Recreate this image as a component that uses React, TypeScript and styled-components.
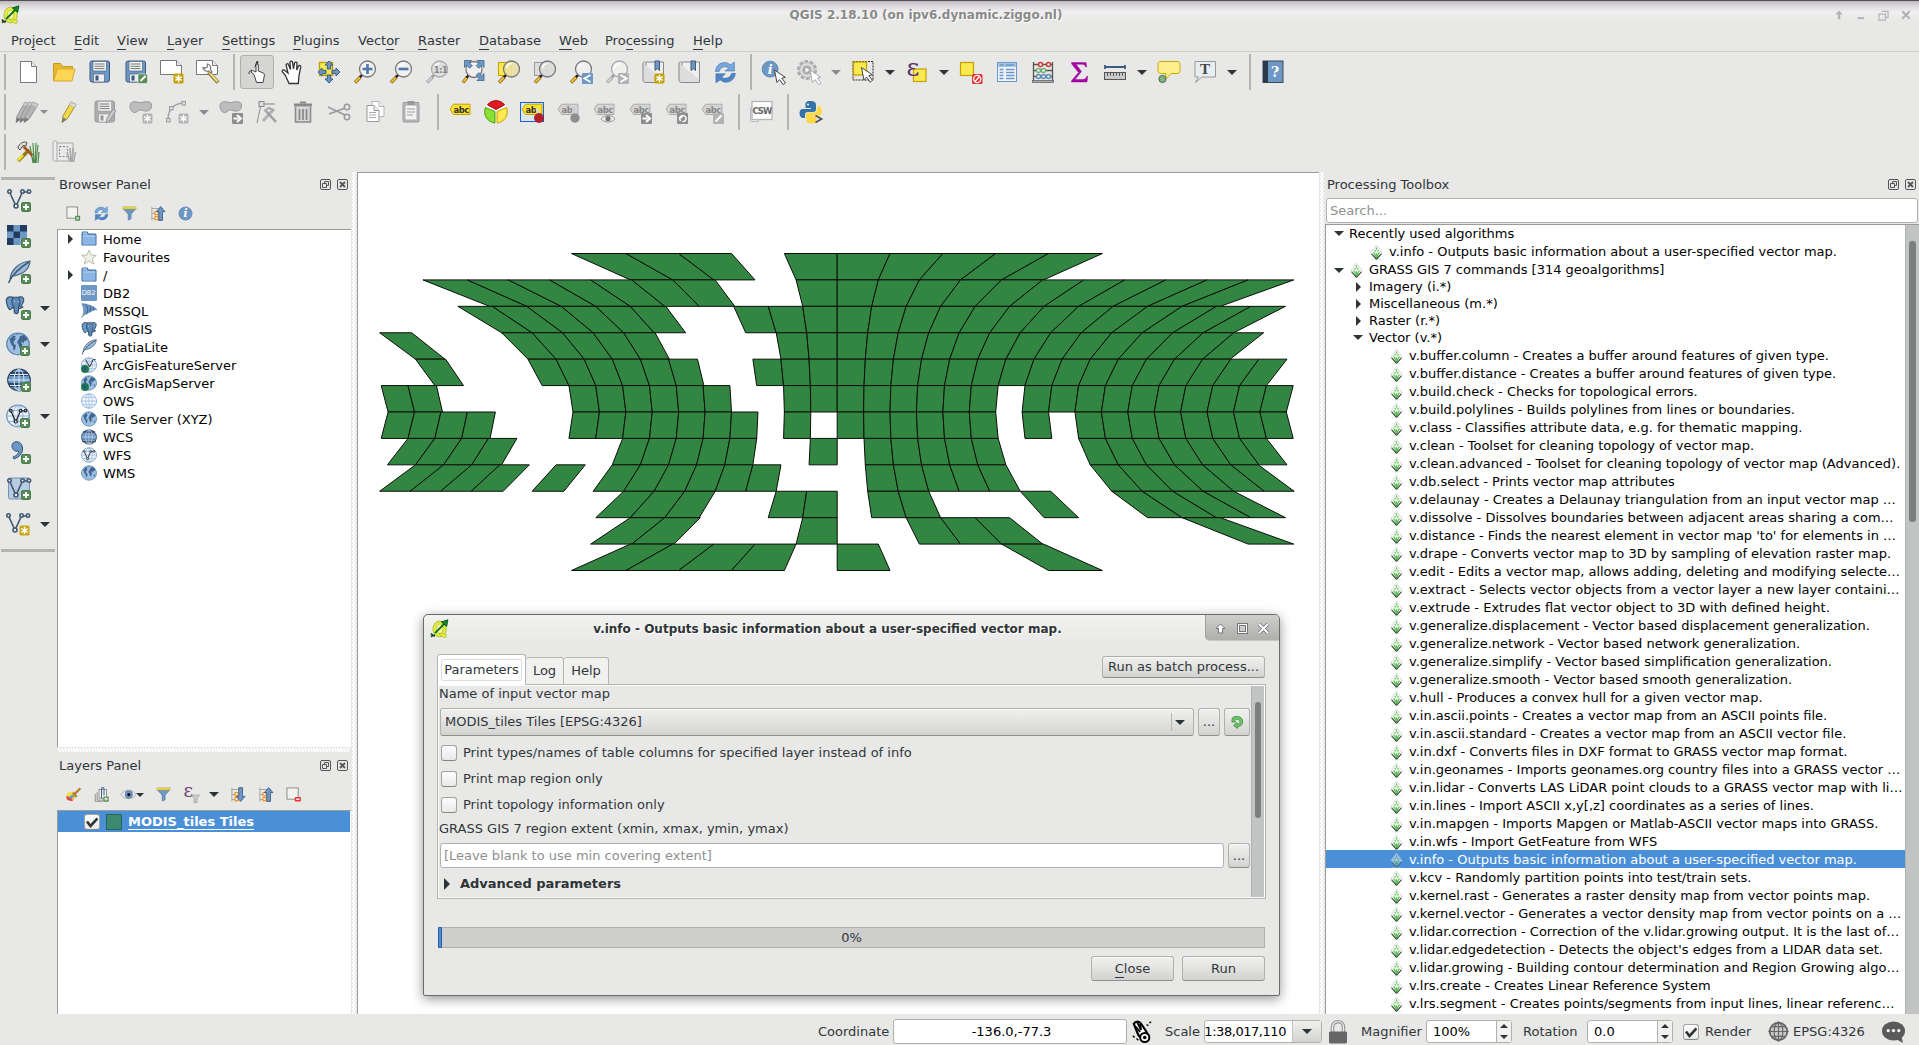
import React from 'react';
import styled, { createGlobalStyle, css } from 'styled-components';

const BG = '#e8e8e6';
const INK = '#31363b';
const SEL = '#4a90d9';

const GlobalStyle = createGlobalStyle`
  html, body { margin: 0; padding: 0; background: ${BG}; overflow: hidden; }
  * { box-sizing: border-box; }
  body { font: 13px/18px "DejaVu Sans", sans-serif; color: ${INK}; }
  svg { display: block; flex: none; }
`;

/* ---------- icon drawings, all on a 24 x 24 grid ---------- */

const B = '#6d97c4';
const BD = '#415a75';
const PlusBadge = () => (
  <g><rect x="14.5" y="14.5" width="9" height="9" rx="1.5" fill="#5a8c5a" stroke="#4b7a4b" /><path d="M19 16v6M16 19h6" stroke="#fff" strokeWidth="1.8" /></g>
);
const StarBadge = ({ c = '#c4a000' }: { c?: string }) => (
  <g><rect x="13.5" y="13.5" width="10" height="10" rx="1.5" fill={c} /><path d="M18.5 14.8v7.4M15.3 16.6l6.4 3.8M21.7 16.6l-6.4 3.8" stroke="#fff" strokeWidth="1.5" /></g>
);
const Lens = ({ cx = 14.5, cy = 9, off = false, fill = '#f1f1ef' }: { cx?: number; cy?: number; off?: boolean; fill?: string }) => (
  <g>
    <path d={`M2 22.5L${cx - 7} ${cy + 8}`} stroke={off ? '#a5a5a5' : '#8a6a20'} strokeWidth="3.4" />
    <path d={`M2.4 22L${cx - 7.4} ${cy + 8.4}`} stroke={off ? '#d0d0d0' : '#fbbf30'} strokeWidth="1.8" />
    <path d={`M${cx - 7.6} ${cy + 8.2}l2.6-2.6`} stroke={off ? '#999' : '#222'} strokeWidth="2.6" />
    <circle cx={cx} cy={cy} r="8" fill={fill} fillOpacity="0.9" stroke={off ? '#a9a9a9' : '#777'} strokeWidth="1.3" />
    <path d={`M${cx - 5} ${cy - 1}a5.4 5.4 0 0 1 5-4.4`} fill="none" stroke="#fff" strokeWidth="1.2" />
  </g>
);
const Cursor = ({ x, y, off = false }: { x: number; y: number; off?: boolean }) => (
  <path transform={`translate(${x} ${y})`} d="M0 0l2.4 12.4 2.7-2.8 3.6 5 2.3-1.7-3.7-4.7 3.5-.9z" fill="#fff" stroke={off ? '#aaa' : '#444'} strokeWidth="1" />
);
const Tag = ({ on = true, t = 'abc' }: { on?: boolean; t?: string }) => (
  <g>
    <path d="M2 9.2L5.5 4.2H22v10.3H5.5z" fill={on ? '#fbe22e' : '#d4d4d4'} stroke={on ? '#c4a000' : '#adadad'} />
    <text x="5.6" y="12.6" fontSize="8.4" fontWeight="700" fontFamily="DejaVu Sans" fill={on ? '#333' : '#868686'} letterSpacing="-.5">{t}</text>
  </g>
);
const GlobeLines = ({ c = '#8fb3dc' }: { c?: string }) => (
  <g fill="none" stroke={c}><ellipse cx="12" cy="12" rx="5" ry="10.5" /><path d="M12 1.5v21M1 12h22M3 6.500h18M3 17.500h18" /></g>
);
const Continents = () => (
  <g fill="#41658e"><path d="M3.500 7l4-3.500 2.500.5-1.500 2 1.500 1-2.500 2.500.5 2.500 2 1.500-1 4-1.500 1-.5-4-2-2.500-1-3z" /><path d="M13 7l1-3 4-1 3.500 3.500-1.500 3-1.500-1-1 3-1.500-2-1 1 1.500 2-1.500 4.500-1.500-1-1-3.500-1.500-2z" /><path d="M18.500 15l2.500-1-1 4zM10 2l2-.5V3z" /></g>
);
const VShape = ({ c = '#41586f' }: { c?: string }) => (
  <g stroke={c} strokeWidth="1.6" fill="#e8eef4"><path d="M2.5 4L9 18l6.500-14h6.500" fill="none" /><circle cx="2.500" cy="3.500" r="1.700" /><circle cx="15.500" cy="3.500" r="1.700" /><circle cx="22" cy="3.500" r="1.700" /><circle cx="9" cy="18" r="2" /></g>
);
const Elephant = () => (
  <g stroke="#34526f" strokeLinejoin="round">
    <path d="M10 3c-3-1.500-7-1.500-8.300.7C.5 6 3 14 4.800 14.500c1 .3 1.700-1 2.700-2 1 .5 1.500.5 2.500.2V5z" fill="#6d97c4" strokeWidth="1.200" />
    <path d="M12.500 2.500c2-1 5-1 6 1 .8 2-1 5.500-2.700 8l2.200.5-2.500 1.300-3 .2z" fill="#6d97c4" strokeWidth="1.200" />
    <path d="M7.500 3.500c2-2 5-2 6.500 0 1.500 2.500.7 6-.3 8.500l-.4 5c-.2 2.200-3.500 2.200-4 0L9 12c-2.500-2-2.500-6-1.500-8.500z" fill="#5c89b8" strokeWidth="1.200" />
    <path d="M9 6.500h.8M13.500 6.500h.6" stroke="#e8f0f8" strokeWidth="1" />
  </g>
);
const Feather = () => (
  <g><path d="M3 19C4 10 12 2 23 1c-.5 8-7 13-16 15" fill="#9dbcdc" stroke="#4b6580" strokeWidth="1.2" /><path d="M1.500 23C5 15 12 8 22 2" fill="none" stroke="#3f5a74" strokeWidth="1.500" /></g>
);
const EllipseGlobe = ({ fill, stroke, children }: { fill: string; stroke: string; children?: React.ReactNode }) => (
  <g><ellipse cx="12" cy="12" rx="11.300" ry="10.800" fill={fill} stroke={stroke} strokeWidth="1.200" />{children}</g>
);
const Bean = () => <path d="M1 6c0-4 4-5 7-4s4 .5 7 0 7-1 7.500 3c.5 5-3 6.500-7 6-2-.2-3-1.500-5-1-2 .6-3 3-5.500 2.500S1 9 1 6z" fill="#bcbcbc" stroke="#9a9a9a" />;
const Floppy = ({ a, d }: { a: string; d: string }) => (
  <g><rect x="2" y="1" width="19.500" height="21" rx="2" fill={a} stroke={d} /><rect x="5" y="1.500" width="13.500" height="9.500" fill="#f4f4f2" stroke={d} strokeWidth=".6" /><path d="M6.500 4h10M6.500 6.300h10M6.500 8.600h10" stroke="#777" /><rect x="5.500" y="14" width="11" height="8" fill="#eee" stroke={d} strokeWidth=".6" /><rect x="7.500" y="15.500" width="3" height="5" fill={d} /></g>
);
const Folder = () => (
  <g><path d="M1.500 21V3.500C1.500 2 2 1.500 3 1.500h6.500l1.500 3h10.500c1 0 1 .5 1 1.500v15z" fill="#7fabdc" stroke="#2c5a93" strokeWidth="1.400" /><path d="M2.500 8h19v12.500h-19z" fill="#8ab5e4" /><path d="M2.500 7.500h19M3 3h6" stroke="#c4dcf5" strokeWidth="1.300" /></g>
);
const Refresh = () => (
  <g fill="#4f86c6" stroke="#2f609f" strokeWidth=".5"><path d="M1.500 11C2 4 8 .5 14 2l3.500 2 4-3v9.500h-10l4-3C11.500 4.700 7 6 5.500 11z" fill="#77a7dd" /><path d="M22.500 13c-.5 7-6.500 10.500-12.500 9L6.500 20l-4.500 3V13.500h10l-4 3.500c4 2.500 9 1 10.500-4z" /></g>
);
const Funnel = () => (
  <g><path d="M1.500 4L10 13v9.500l4.500-2V13L22.500 4z" fill="#6d97c4" stroke="#4d7299" /><path d="M1 3.200h22" stroke="#e8d838" strokeWidth="3.400" /><path d="M1 1h22M1 5h22" stroke="#a0983c" strokeWidth=".6" /></g>
);
const TreeArrow = ({ up }: { up: boolean }) => (
  <g>
    <path d="M3 1v22M3 4h18M3 12h6M3 20h6" stroke="#999" strokeWidth="1.300" fill="none" />
    <rect x="8" y="9" width="5" height="5" fill="#fff" stroke="#f28c1c" strokeWidth="1.800" /><rect x="8" y="17" width="5" height="5" fill="#fff" stroke="#f28c1c" strokeWidth="1.800" />
    <path transform={up ? '' : 'matrix(1 0 0 -1 0 24)'} d="M17 1l7 8h-4v14h-6V9h-4z" fill={B} stroke="#2d4e74" strokeWidth="1.200" />
  </g>
);
const InfoDisc = () => (
  <g><circle cx="12" cy="12" r="10.500" fill={B} stroke="#4d79aa" /><text x="8.800" y="18" fontSize="17" fontStyle="italic" fontWeight="700" fontFamily="DejaVu Serif" fill="#fff">i</text></g>
);
const Branch = () => (
  <g>
    <path d="M12 0l9 12-9 11-9-11z" fill="#f5f9f4" stroke="#c6cfc5" strokeWidth="1" />
    <path d="M12 4v3M12 13v8M12 20.500L7.500 12M12 20.500l4.500-8.500M9.300 8l.9 2.500M14.700 8l-.9 2.500" stroke="#55c04c" strokeWidth="2" fill="none" />
    <path d="M4 14l8 9 8-9" stroke="#2c3a2c" strokeWidth="1.700" fill="none" />
    <path d="M4 23.500h16" stroke="#d8dbd8" strokeWidth="1" />
  </g>
);
const LogoQ = () => (
  <g><ellipse cx="11.500" cy="12" rx="8" ry="9.500" fill="#e3ef3a" stroke="#a8b53a" /><ellipse cx="11.500" cy="12" rx="4" ry="6" fill="#f4f7a8" stroke="#b8c33c" /><path d="M10 17c3 1 4 6 9 5l1-3-5-2z" fill="#e3ef3a" stroke="#a8b53a" strokeWidth=".8" /><path d="M6 17L18 5" stroke="#0d6e22" strokeWidth="2.400" /><path d="M13.500 3.500L21.500 1l-1.500 8z" fill="#0f8a2a" stroke="#094a16" /><path d="M1 17.500l4.500 3.500M1 21l5-2" stroke="#1a3c1a" strokeWidth="1.800" /></g>
);
const Page = ({ x = 0, y = 0, w = 16, h = 21, c = '#777' }: { x?: number; y?: number; w?: number; h?: number; c?: string }) => (
  <g><path d={`M${x} ${y}h${w - 5}l5 5v${h - 5}h${-w}z`} fill="#fff" stroke={c} /><path d={`M${x + w - 5} ${y}v5h5`} fill="#eee" stroke={c} /></g>
);
const Pencil = ({ off = false, dx = 0 }: { off?: boolean; dx?: number }) => (
  <g transform={`translate(${dx} 0)`}><path d="M5 22.500l1-6.500L14 2l5 2.500-8.500 14z" fill={off ? '#b4b4b4' : '#f0d84a'} stroke={off ? '#999' : '#a8902a'} /><path d="M14 2l5 2.500-1.500 3-5.200-2.500z" fill={off ? '#ccc' : '#ddd'} stroke="#aaa" strokeWidth=".6" /><path d="M5 22.500l.8-5 4 2z" fill="#777" /></g>
);
const Bubble = ({ fill, stroke }: { fill: string; stroke: string }) => <path d="M4 1.500h16c2 0 3 1 3 3v6c0 2-1 3-3 3h-6l-5.500 6 .5-6H4c-2 0-3-1-3-3v-6c0-2 1-3 3-3z" fill={fill} stroke={stroke} />;
const Book = () => <g><path d="M2 3c0-1.500 3-1.500 3 0v16.500h17.500V2H5" fill="#efefef" stroke="#888" /><path d="M2 3v17.500c0 2 3 2 4 2h16.500v-3" fill="#ddd" stroke="#888" /><path d="M14 1h4.500v9.500l-2.200-2-2.300 2z" fill={B} stroke={BD} /></g>;
const BadgeBox = ({ c, children }: { c: string; children: React.ReactNode }) => <g><rect x="13" y="13" width="11" height="11" rx="1" fill={c} />{children}</g>;

const glyphs: Record<string, React.ReactNode> = {
  logo: <LogoQ />,
  newdoc: <Page x={4.500} y={1.500} />,
  open: <g><path d="M1.500 21V3.500h7l2 3h10V10" fill="#e8b92e" stroke="#c89b1e" /><path d="M1.500 21l4-12h17.500l-3 12z" fill="#fdd655" stroke="#d7a628" /></g>,
  save: <Floppy a={B} d="#3d5a7d" />,
  saveas: <g><Floppy a={B} d="#3d5a7d" /><rect x="14" y="14" width="9.500" height="9.500" rx="1.500" fill="#5a8c5a" stroke="#fff" strokeWidth=".5" /><path d="M16.500 21l5-5" stroke="#fff" strokeWidth="2" /></g>,
  composer: <g><Page x={0.500} y={0.500} w={21} h={14} /><StarBadge /></g>,
  manager: <g><Page x={0.500} y={0.500} w={21} h={14} /><path d="M12.500 12L22 22.500" stroke="#8f7c3a" strokeWidth="4" /><path d="M13 12l8.500 9.500" stroke="#f0dc82" strokeWidth="2" /><path d="M7 7.500c.3 2.500 3 4.500 5.500 3.500l2.500 2 1-1-1.500-2.500C15.500 7 14 4.300 11.500 4l-.3 3.200-2 .8z" fill="#fff" stroke="#777" strokeWidth="1.200" /></g>,
  touch: <g><path d="M9 14.500L6 12l1.500-1.500L11 12V5c0-2 2.300-2 2.300 0v6l5 2c1 .5 1.200 1.500 1 3L18 22.500h-6.500z" fill="#fff" stroke="#444" /><path d="M4 14c0-3 1-3 3-4M12 1l-2 6M13 1l-1 4" stroke="#333" fill="none" /></g>,
  hand: <path d="M8 23.500L4.500 15.500 1.500 12c-1-1.800 1-3 2.700-1.300L7 13 5.200 5.300C4.800 3.700 7 3 7.500 4.700L9.500 9.500 9 2.500C9 .7 11.400.7 11.600 2.500L12.500 9l1-5.800c.3-1.600 2.500-1.300 2.500.3L15.700 10l1.800-3.800c.7-1.400 2.600-.7 2.200.9L18 15.500l-.7 8z" fill="#fff" stroke="#333" strokeWidth="1.300" />,
  pansel: <g><rect x="2.500" y="2.500" width="13" height="13" fill="#fce94f" stroke="#c4a000" strokeWidth="1.400" /><path d="M12 1l4 4h-2.300v4h-3.400V5H8zM12 23l4-4h-2.300v-4h-3.400v4H8zM1 12l4-4v2.300h4v3.400H5V16zM23 12l-4-4v2.300h-4v3.400h4V16z" fill={B} stroke="#395a80" /></g>,
  zoomin: <g><Lens /><path d="M14.500 4v10M9.500 9h10" stroke="#4d79aa" strokeWidth="2.600" /></g>,
  zoomout: <g><Lens /><path d="M9.500 9h10" stroke="#4d79aa" strokeWidth="2.600" /></g>,
  zoom11: <g><Lens off fill="#ddd" /><text x="8.600" y="12.500" fontSize="9" fontWeight="700" fontFamily="DejaVu Sans" fill="#888" letterSpacing="-.8">1:1</text></g>,
  zoomfull: <g><Lens cx={13} cy={9.500} /><g fill={B} stroke="#3f658f" strokeWidth=".8"><path d="M3.500.5h7L8.300 2.700l3 3L8.700 8.300l-3-3L3.500 7.500z" /><path d="M23 .5h-7l2.200 2.200-3 3 2.600 2.600 3-3L23 7.500z" /><path d="M23 20.500h-7l2.200-2.200-3-3 2.600-2.600 3 3 2.200-2.200z" /></g></g>,
  zoomsel: <g><rect x="1.500" y="2.500" width="13" height="13" fill="#fce94f" stroke="#c4a000" /><Lens fill="#e9e2a4" /></g>,
  zoomlayer: <g><rect x="1.500" y="2.500" width="13" height="13" fill="#ddd" stroke="#999" /><Lens fill="#dcdcd9" /></g>,
  zoomlast: <g><Lens /><BadgeBox c={B}><path d="M21.500 15l-6 3.500 6 3.500" stroke="#fff" strokeWidth="1.900" fill="none" /></BadgeBox></g>,
  zoomnext: <g><Lens off /><BadgeBox c="#b3b3b3"><path d="M15.500 15l6 3.500-6 3.500" stroke="#fff" strokeWidth="1.900" fill="none" /></BadgeBox></g>,
  newbook: <g><Book /><StarBadge /></g>,
  book: <Book />,
  refresh: <g transform="translate(1 1) scale(.95)"><Refresh /></g>,
  info: <g><g transform="scale(.76)"><InfoDisc /></g><Cursor x={13.500} y={10} /></g>,
  action: <g><circle cx="10" cy="10" r="8.300" fill="none" stroke="#a9a9a9" strokeWidth="3.400" strokeDasharray="3.500 1.700" /><circle cx="10" cy="10" r="7.500" fill="#dcdcdc" stroke="#b5b5b5" /><circle cx="10" cy="10" r="4.500" fill="#aaa" /><path d="M8.500 7.500l4.200 2.500-4.200 2.500z" fill="#fff" /><Cursor x={13} y={10} off /></g>,
  select: <g><rect x="2" y="1.500" width="20" height="18.500" fill="none" stroke="#222" strokeDasharray="2 1" /><rect x="2.500" y="2" width="13" height="13" fill="#fce94f" stroke="#c4a000" strokeWidth="1.300" /><Cursor x={10.500} y={7.500} /></g>,
  eps: <g><rect x="8.500" y="9" width="12.500" height="12.500" fill="#fce94f" stroke="#c4a000" strokeWidth="1.200" /><text x="1.500" y="15.500" fontSize="25" fontFamily="DejaVu Serif" fill="#5c3566">ε</text></g>,
  desel: <g><rect x="1.500" y="2.500" width="13" height="13" fill="#fce94f" stroke="#c4a000" strokeWidth="1.200" /><rect x="13" y="14" width="10.500" height="10" rx="1.500" fill="#d33" /><circle cx="18.200" cy="19" r="3.600" fill="none" stroke="#fff" strokeWidth="1.300" /><path d="M16 21.500l4.500-5" stroke="#fff" strokeWidth="1.300" /></g>,
  table: <g><rect x="2.500" y="2.500" width="19" height="19" fill="#eff5fb" stroke={B} /><path d="M3 5h18" stroke="#9fc4e8" strokeWidth="4" /><path d="M5 5h4M11 5h8" stroke={B} strokeWidth="1.600" /><path d="M4.500 9.500h4M4.500 12.500h4M4.500 15.500h4M4.500 18.500h4M11 9.500h8.500M11 12.500h8.500M11 15.500h8.500M11 18.500h8.500" stroke={B} strokeWidth="1.300" /></g>,
  abacus: <g><path d="M2.500 2v19M21.500 2v19M2.500 4.500h19M2.500 10.500h19M2.500 16.500h19" stroke="#555" strokeWidth="1.300" /><g fill="#fff" strokeWidth="1.500"><g stroke="#c33"><circle cx="9.500" cy="4.500" r="2" /><circle cx="17.500" cy="4.500" r="2" /></g><g stroke="#6fb06f"><circle cx="7.500" cy="10.500" r="2" /><circle cx="12.500" cy="10.500" r="2" /></g><g stroke="#5c89b8"><circle cx="7.500" cy="16.500" r="2" /><circle cx="12.500" cy="16.500" r="2" /><circle cx="17.500" cy="16.500" r="2" /></g></g><rect x="1.500" y="20.500" width="21" height="2" fill="#aaa" stroke="#666" strokeWidth=".8" /></g>,
  sigma: <path d="M4.500 2.500H19l.7 4.500h-1c-.6-2-1.500-2.700-4-2.700H9l5.500 7.200L8 19.500h7.500c2.500 0 3.500-1 4.300-3.200h1L20 22H4.500v-1.200l7-8.300-7-8.800z" fill="#a800a8" stroke="#8b008b" strokeWidth=".4" />,
  ruler: <g><path d="M2 7h20M2 5v4M22 5v4" stroke="#3b5c80" strokeWidth="1.800" /><rect x="1.500" y="12.500" width="21" height="7" fill="#c9c9c9" stroke="#555" /><path d="M4.500 13v3M7.500 13v2.500M10.500 13v3M13.500 13v2.500M16.500 13v3M19.500 13v2.500" stroke="#555" /></g>,
  tip: <g><Bubble fill="#fdf08c" stroke="#c9a900" /><circle cx="5.500" cy="19" r="3.600" fill="#7fb07f" stroke="#4b6b4b" /></g>,
  annot: <g><path d="M2 1.500h20.500V17H9l-6.500 5.500L5.500 17H2z" fill="#e6eef2" stroke="#999" /><text x="7" y="14" fontSize="15" fontWeight="700" fontFamily="Liberation Serif" fill="#444">T</text></g>,
  help: <g><rect x="2" y="1" width="20" height="21.500" fill={B} stroke="#3b4a58" /><rect x="2" y="1" width="5" height="21.500" fill="#29394a" /><text x="10" y="17" fontSize="14" fontWeight="700" fontFamily="DejaVu Serif" fill="#fff">?</text></g>,
  edits: <g><Pencil off dx={-5} /><Pencil off dx={-1} /><Pencil off dx={3} /></g>,
  edit: <Pencil />,
  saveedit: <g><Floppy a="#adadad" d="#999" /><path d="M13 23l1-5 6-9 3 2-6 9z" fill="#c6c6c6" stroke="#999" /></g>,
  addfeat: <g><Bean /><StarBadge c="#b3b3b3" /></g>,
  addcurve: <g><path d="M3 20C3 11 7 4 18 3" fill="none" stroke="#a5a5a5" strokeWidth="1.500" /><g fill="#ddd" stroke="#999"><rect x="1.500" y="18.500" width="3.500" height="3.500" /><rect x="4.500" y="6.500" width="3.500" height="3.500" /><rect x="17" y="1.500" width="3.500" height="3.500" /></g><StarBadge c="#b3b3b3" /></g>,
  movefeat: <g><Bean /><BadgeBox c="#8e8e8e"><path d="M14.500 18.500h5M18 15l4 3.500-4 3.500" stroke="#fff" strokeWidth="2" fill="none" /></BadgeBox></g>,
  node: <g><path d="M2 23L6 4h14" stroke="#a5a5a5" strokeWidth="1.300" fill="none" /><rect x="4" y="1.500" width="5" height="5" fill="#ddd" stroke="#888" /><path d="M8 21L19 9" stroke="#b5b5b5" strokeWidth="3.200" /><path d="M11 11l10 11" stroke="#a0a0a0" strokeWidth="2.600" /><path d="M9 11l5-3 4 2" stroke="#aaa" strokeWidth="2" fill="none" /></g>,
  trash: <g fill="none" stroke="#8a8a8a"><path d="M4.500 7v15h15V7" fill="#d9d9d9" strokeWidth="1.600" /><path d="M3 5h18" strokeWidth="3" /><path d="M9 2.500h6" strokeWidth="2" /><path d="M8.500 9v11M12 9v11M15.500 9v11" strokeWidth="1.800" /></g>,
  cut: <g fill="none" stroke="#9a9a9a" strokeWidth="1.500"><path d="M1 7l17 8M2 14L18 8" /><circle cx="20" cy="7" r="2.700" /><circle cx="20" cy="17" r="2.700" /></g>,
  copy: <g><Page x={9} y={1.500} w={12} h={15} c="#b5b5b5" /><Page x={4} y={5.500} w={12} h={16} c="#999" /><path d="M6 12.500h7M6 15h7M6 17.500h7" stroke="#aaa" /></g>,
  paste: <g><rect x="4" y="2.500" width="16" height="19.500" rx="1" fill="#bbb" stroke="#999" /><rect x="6" y="5" width="12" height="15" fill="#f4f4f4" stroke="#aaa" /><rect x="8.500" y="1" width="7" height="4" fill="#999" /><path d="M8 9h8M8 12h8M8 15h6" stroke="#999" /></g>,
  tagon: <Tag />,
  pie: <g><circle cx="12" cy="12" r="11.300" fill="#fff" /><path d="M11 11.500L1.500 7.500A11.300 11.300 0 0 0 11 23z" fill="#8ae234" stroke="#4e9a06" /><path d="M13 11.500l9.500-4A11.300 11.300 0 0 1 13 23z" fill="#fce94f" stroke="#c4a000" /><path d="M12 9.500L3.500 4.800a10.800 10.800 0 0 1 17 0z" fill="#e01b24" stroke="#a40000" /></g>,
  tagpin: <g><rect x="0.500" y="2.500" width="23" height="19" fill="#dbe6f2" stroke="#1b63c6" /><Tag t="ab" /><path d="M16.500 8.500l3 7" stroke="#ddd" strokeWidth="2.500" /><circle cx="19" cy="18" r="4.700" fill="#b3202a" stroke="#8a1018" strokeWidth=".5" /></g>,
  tagpin0: <g><Tag on={false} t="ab" /><path d="M17.500 7v9" stroke="#ccc" strokeWidth="3" /><circle cx="19" cy="18" r="4.700" fill="#8e8e8e" /></g>,
  tageye: <g><Tag on={false} /><path d="M9 19c3-4.500 11-4.500 14 0-3 4-11 4-14 0z" fill="#eee" stroke="#999" /><circle cx="16" cy="18.700" r="2.600" fill="#777" /></g>,
  tagmove: <g><Tag on={false} /><BadgeBox c="#8e8e8e"><path d="M14.500 18.500h5M18 15l4 3.500-4 3.500" stroke="#fff" strokeWidth="2" fill="none" /></BadgeBox></g>,
  tagrot: <g><Tag on={false} /><BadgeBox c="#8e8e8e"><path d="M16 20c-2-4 5-6.500 6-2 .5 2-1.500 4-3.500 3.500M18.500 17l-3 1 1 3" stroke="#fff" strokeWidth="1.500" fill="none" /></BadgeBox></g>,
  tagedit: <g><Tag on={false} /><BadgeBox c="#b3b3b3"><path d="M15.500 21.500l6-6" stroke="#fff" strokeWidth="2" /></BadgeBox></g>,
  csw: <g><path d="M1.500 21V8h8v13.500h-8" fill="#eee" stroke="#bbb" /><rect x="3" y="1.500" width="20" height="18" fill="#fff" stroke="#b5b5b5" strokeWidth="1.300" /><text x="3.400" y="13.600" fontSize="9.400" fontWeight="700" fontFamily="DejaVu Sans Condensed, DejaVu Sans" fill="#666" letterSpacing="-.9">CSW</text></g>,
  python: <g><path d="M11.500 1c-5 0-5 1.500-5 5v2H12v1H4C1.500 9 .5 11 .5 13.500S2 18 4 18h2v-3c0-2 1-3 3-3h5c2 0 3-1 3-3V5c0-3-2-4-5.500-4z" fill="#3572a5" /><circle cx="9" cy="4.500" r="1" fill="#fff" /><path d="M12.500 23.500c5 0 5-1.500 5-5v-2H12v-1h8c2.500 0 3-2 3-4.500S22.500 6.500 20 6.500h-2v3c0 2-1 3-3 3h-5c-2 0-3 1-3 3V20c0 2.500 2 3.500 5.500 3.500z" fill="#ffd845" /><path d="M16.500 15.500l6 3.500-6 3.500" stroke="#555" strokeWidth="1.800" fill="none" /></g>,
  grassopen: <g><path d="M12 9l7 14M14 6l3 17M17 3l1 20M20 3l-1 20M22 5l-2 18M23 12l-1 11" stroke="#4c8c4c" strokeWidth="1.200" fill="none" /><path d="M2 21L13 10" stroke="#8d7a1c" strokeWidth="3.600" /><path d="M2 20.500L7 15" stroke="#f5ea2a" strokeWidth="2.400" /><path d="M2 8c1-5 6-7 9-5.500L10 6 7 5.500 4 10z" fill="#ddd" stroke="#555" /><path d="M7.500 6.500l9 9" stroke="#a05a22" strokeWidth="2.800" /></g>,
  grassreg: <g><path d="M4 3v18h16" fill="none" stroke="#aaa" /><path d="M1 3c0-3 4-3 4 0v16c0 3-4 3-4 0z" fill="#ececec" stroke="#aaa" /><path d="M5 3h16v13" fill="none" stroke="#aaa" /><rect x="7.500" y="6.500" width="8" height="10" fill="none" stroke="#888" strokeDasharray="2 1.500" /><path d="M15 12l3 10M18 8l1 14M21 8l-1 14M23.500 12l-2 10" stroke="#aaa" strokeWidth="1.600" /></g>,
  addvector: <g><VShape /><PlusBadge /></g>,
  addraster: <g><rect x="0" y="1" width="20" height="20" fill={B} /><path d="M0 1h6.500v6.500H0zM13 1h7v6.500h-7zM6.500 7.500H13V14H6.500zM0 14h6.500v7H0z" fill="#213c5e" /><path d="M13 14h7v7h-7z" fill="#86add6" /><PlusBadge /></g>,
  addsqlite: <g><Feather /><PlusBadge /></g>,
  addpg: <g><g transform="translate(-2 -1)"><Elephant /></g><PlusBadge /></g>,
  addwms: <g transform="translate(-1 0)"><EllipseGlobe fill="#9dbfe3" stroke="#5f86b0"><Continents /></EllipseGlobe><PlusBadge /></g>,
  addwcs: <g><EllipseGlobe fill="#6d97c4" stroke="#2b4363"><path d="M3 6h18M2 17h20" stroke="#2b4363" strokeWidth="4" /><GlobeLines c="#dbe8f5" /></EllipseGlobe><PlusBadge /></g>,
  addwfs: <g transform="translate(-1 0)"><EllipseGlobe fill="#eef4fb" stroke="#6d97c4"><GlobeLines /></EllipseGlobe><g transform="translate(3 4) scale(.75)"><VShape c="#222" /></g><PlusBadge /></g>,
  addcsv: <g><path d="M5 6c0-6 10-6 10.500 2C16 14 12 17 7 19l-1-2c4-1.500 6-4 5.500-6C8 12 5 9.500 5 6z" fill="#6d97c4" stroke="#34526f" /><PlusBadge /></g>,
  addvirt: <g><rect x="1.500" y="2" width="21" height="21" rx="1.500" fill="#b6cce3" stroke="#7591b0" /><g transform="translate(0 1)"><VShape /></g><PlusBadge /></g>,
  newvector: <g transform="translate(-1 0)"><VShape /><StarBadge c="#c9a516" /></g>,
  addlayer: <g><rect x="1.500" y="1.500" width="17" height="18" fill="#f2f2f0" stroke="#888" strokeWidth="1.500" /><rect x="14.500" y="15.500" width="8" height="8" rx="1" fill="#5a8c5a" /><circle cx="18.500" cy="19.500" r="2" fill="#cfe4cf" /></g>,
  reload: <Refresh />,
  funnel: <Funnel />,
  collapse: <TreeArrow up />,
  expand: <TreeArrow up={false} />,
  infodisc: <InfoDisc />,
  brush: <g><path d="M1 12c3-4 8-5 11-4l4 5-5 9C6 23 5 20 1 18z" fill="#f5bf35" /><path d="M1 12c3-4 8-5 11-4l1 3L3 16z" fill="#f3e23c" /><path d="M1 14l8 4 2 4c-4 1-8-1-10-3z" fill="#e8443c" /><path d="M4 17l6-5 3 2-4 5z" fill="#5a9ae0" /><path d="M11 9l6 7M14 11l9-9" stroke="#b87d2e" strokeWidth="3.500" /></g>,
  group: <g fill="none" stroke="#888" strokeWidth="1.400"><rect x="8" y="4" width="12" height="14" fill="#f2f2f0" /><path d="M5 8v13h12M2 11v12h12" /><path d="M12 18V3c0-3 4-3 4 0v10" stroke="#3f658f" strokeWidth="1.700" /><rect x="15" y="15" width="8.500" height="8.500" rx="1" fill="#5a8c5a" stroke="none" /><path d="M19.200 16.500v5.500M16.500 19.200h5.500" stroke="#fff" strokeWidth="1.600" /></g>,
  eye: <g><path d="M0 12C5 3 19 3 24 12 19 21 5 21 0 12z" fill="#eee" stroke="#aaa" strokeWidth="1.500" /><circle cx="12.500" cy="12" r="6" fill="#6d97c4" stroke="#4d6a8c" /><circle cx="12.500" cy="12" r="2.600" fill="#111" /></g>,
  epsfilter: <g><text x="-1" y="16" fontSize="30" fontFamily="DejaVu Serif" fill="#6b4473">ε</text><path d="M12 13h13l-4 5v7h-5v-7z" fill="#ccc" stroke="#999" /></g>,
  remove: <g><rect x="1.500" y="1.500" width="18" height="18" fill="#f2f2f0" stroke="#888" strokeWidth="1.500" /><rect x="14" y="16" width="10" height="7" rx="1.500" fill="#e33" /><path d="M16 19.500h6" stroke="#fff" strokeWidth="2" /></g>,
  folder: <Folder />,
  star: <path d="M12 1.500l3 7.500 8 .5-6 5 2 8-7-4.500L5 22.500l2-8-6-5L9 9z" fill="#f0f0e6" stroke="#bdbdaa" strokeWidth="1.500" />,
  db2: <g><rect x="0" y="0" width="24" height="24" rx="2" fill={B} /><text x="1" y="15.500" fontSize="10" fontFamily="DejaVu Sans" fill="#fff">DB2</text></g>,
  mssql: <g><path d="M1 1c4 0 8 .5 11 2 4 1 9 3.500 12 7-4 0-7 1-10 3.500C10 15.500 4 17 1 22c4-6 4-15 0-21z" fill={B} stroke="#4d79aa" strokeWidth=".8" /><path d="M7 2c4 5 4 10 1 15M13 3.500c2 3 2.500 6 0 10M18 6c1.500 1.500 1.500 3 0 5" stroke="#3b5f88" fill="none" strokeWidth="1.500" /></g>,
  pg: <g transform="translate(0 0) scale(1.220)"><Elephant /></g>,
  feather: <Feather />,
  arcf: <g><EllipseGlobe fill="#eef4fb" stroke="#6d97c4"><GlobeLines /></EllipseGlobe><path d="M7 4l6 11 5-11h4" stroke="#333" fill="none" strokeWidth="1.500" /><circle cx="6" cy="18" r="6" fill="#1c7a4a" /><path d="M3 16l3-2 2 4-2 4z" fill="#2a4f8f" /></g>,
  arcm: <g><EllipseGlobe fill="#9dbfe3" stroke="#5f86b0"><Continents /></EllipseGlobe><circle cx="6" cy="18" r="6" fill="#1c7a4a" /><path d="M3 16l3-2 2 4-2 4z" fill="#2a4f8f" /></g>,
  ows: <EllipseGlobe fill="#f4f8fd" stroke="#7ba6d8"><GlobeLines /></EllipseGlobe>,
  wms: <EllipseGlobe fill="#9dbfe3" stroke="#5f86b0"><Continents /></EllipseGlobe>,
  wcs: <EllipseGlobe fill="#6d97c4" stroke="#2b4363"><path d="M3 5.500h18M2 18h20" stroke="#2b4363" strokeWidth="4" /><GlobeLines c="#cfe0f2" /></EllipseGlobe>,
  wfs: <EllipseGlobe fill="#eef4fb" stroke="#6d97c4"><GlobeLines /><g transform="translate(3 4) scale(.75)"><VShape c="#222" /></g></EllipseGlobe>,
  branch: <Branch />,
  iter: <g><path d="M4 5c6-5 17-3 18 6 0 6-5 9-9 9v3l-7-5 6-5v3c3 0 5-2 5-5-1-4-6-5-9-2l2 3H3z" fill="#6fc36a" stroke="#2f8a35" strokeWidth="1.200" /></g>,
  mouse: <g><path d="M3 3c2-3 6-3 8 0l6 9c2 4-1 7-4 6-3 0-5-2-6-5z" fill="#fff" stroke="#000" strokeWidth="2.400" /><path d="M7 2l4 8M5 6l5 6M10 3l1 7" stroke="#000" strokeWidth="2" /><circle cx="15" cy="18" r="5" fill="#fff" stroke="#000" strokeWidth="2.200" /><circle cx="15" cy="18" r="2" fill="#000" /><path d="M17 4l2 1M20 2l2-1M2 16l2 2M6 19l2 2" stroke="#000" strokeWidth="1.500" /></g>,
  lock: <g><path d="M6.500 12V7c0-7 11-7 11 0v5" fill="none" stroke="#999" strokeWidth="3.600" /><path d="M6.500 12V7c0-7 11-7 11 0v5" fill="none" stroke="#eee" strokeWidth="1.200" /><rect x="3" y="11.500" width="18" height="12" rx="1.500" fill="#666" /></g>,
  crs: <g fill="none" stroke="#666"><circle cx="12" cy="12" r="10" strokeWidth="2" fill="#c8c8c8" /><ellipse cx="12" cy="12" rx="5" ry="10" strokeWidth="1.300" /><path d="M12 1v22M1 12h22M3.500 6.500h17M3.500 17.500h17" strokeWidth="1.300" /><path d="M12 0l3 3h-6zM12 24l3-3h-6zM0 12l3-3v6zM24 12l-3-3v6z" fill="#666" stroke="none" /></g>,
  msg: <g><ellipse cx="12" cy="11.500" rx="12" ry="10" fill="#5a5a5a" /><path d="M13 19l9 5-2-8z" fill="#5a5a5a" /><circle cx="6.500" cy="11" r="1.700" fill="#fff" /><circle cx="12" cy="11" r="1.700" fill="#fff" /><circle cx="17.500" cy="11" r="1.700" fill="#fff" /></g>,
  up: <path d="M12 1l9 10h-6v11H9V11H3z" fill="#b4b4b4" />,
  min: <path d="M4 17h15v5H4z" fill="#b4b4b4" />,
  restore: <path d="M8 3h14v13h-5M2 9h14v13H2z" fill="none" stroke="#b4b4b4" strokeWidth="2.600" />,
  close: <path d="M3 3l18 18M21 3L3 21" stroke="#b0b0b0" strokeWidth="5" />,
};

const Icon = ({ name, size = 24, opacity = 1 }: { name: string; size?: number; opacity?: number }) => (
  <svg width={size} height={size} viewBox="0 0 24 24" opacity={opacity} overflow="visible">{glyphs[name]}</svg>
);

/* ---------- shared parts ---------- */

const Caret = styled.i<{ $dir?: 'right' | 'down' | 'up'; $c?: string; $s?: number }>`
  display: block; flex: none; width: 0; height: 0;
  ${({ $dir = 'down', $c = '#2e3436', $s = 5 }) =>
    $dir === 'down'
      ? css`border-left: ${$s}px solid transparent; border-right: ${$s}px solid transparent; border-top: ${$s}px solid ${$c};`
      : $dir === 'up'
        ? css`border-left: ${$s}px solid transparent; border-right: ${$s}px solid transparent; border-bottom: ${$s}px solid ${$c};`
        : css`border-top: ${$s}px solid transparent; border-bottom: ${$s}px solid transparent; border-left: ${$s}px solid ${$c};`}
`;
const Window = styled.div`
  width: 1919px; height: 1045px; display: flex; flex-direction: column; overflow: hidden; background: ${BG};
`;
const TitleBar = styled.header`
  height: 29px; flex: none; display: flex; align-items: center;
  border-top: 1px solid #554f55; padding: 0 8px 0 1px;
  background: linear-gradient(#bdbabd 0, #dcdadc 5px, #f0efef 11px, ${BG} 20px);
`;
const TitleText = styled.h1<{ $faded?: boolean; $shift?: number }>`
  flex: 1; margin: 0 0 0 ${({ $shift = 0 }) => $shift}px; text-align: center; font-size: 12px; line-height: 18px; font-weight: 700;
  color: ${({ $faded }) => ($faded ? '#888a88' : '#2e3436')}; text-shadow: 1px 1px 0 #fff;
`;
const WinControls = styled.div`display: flex; gap: 12px; align-items: center;`;
const MenuBar = styled.nav`
  height: 23px; flex: none; display: flex; border-bottom: 1px solid #cfcfcd; padding-left: 2px;
`;
const MenuItem = styled.span<{ $w: number }>`width: ${({ $w }) => $w}px; padding-left: 9px; line-height: 23px;`;
const Mnemonic = styled.span`box-shadow: 0 1px 0 ${INK}; display: inline-block; line-height: 16px;`;

const ToolRow = styled.div`height: 40px; flex: none; display: flex; align-items: center; padding-left: 4px;`;
const Handle = styled.i<{ $l?: number; $r?: number }>`
  width: 2px; height: 36px; background: #b4b4b2; margin: 0 ${({ $r = 4 }) => $r}px 0 ${({ $l = 0 }) => $l}px; flex: none;
`;
const Slot = styled.span<{ $w?: number; $on?: boolean }>`
  width: ${({ $w = 36 }) => $w}px; height: 34px; flex: none; display: flex; align-items: center; justify-content: center;
  ${({ $on }) => $on && css`width: 34px; margin: 0 1px; background: #d5d5d3; border: 1px solid #b0b0ae; border-radius: 3px;`}
`;
const EditSlot = styled(Slot)`justify-content: flex-start; padding-left: 6px;`;
const Body = styled.main`flex: 1; min-height: 0; display: flex;`;
const SideBar = styled.aside`width: 57px; flex: none; padding: 5px 2px 0 1px;`;
const SideHandle = styled.i`display: block; height: 3px; background: #b4b4b2;`;
const SideSlots = styled.div`padding: 2px 0 7px 6px;`;
const SideSlot = styled.div`height: 36px; display: flex; align-items: center; gap: 9px;`;
const Dock = styled.section`width: 294px; flex: none; display: flex; flex-direction: column;`;
const DockTitle = styled.div<{ $h: number; $pt: number }>`
  height: ${({ $h }) => $h}px; padding: ${({ $pt }) => $pt}px 3px 0 2px; display: flex; align-items: flex-start; gap: 6px; flex: none;
  & > span { flex: 1; }
`;
const DockTools = styled.div<{ $h: number; $pb?: number }>`
  height: ${({ $h }) => $h}px; flex: none; display: flex; align-items: center; padding: 0 0 ${({ $pb = 0 }) => $pb}px 2px;
`;
const Tree = styled.div<{ $h?: number }>`
  background: #fff; border-left: 1px solid #9b9b97; border-top: 1px solid #9b9b97; color: #000; overflow: hidden;
  ${({ $h }) => ($h ? css`height: ${$h}px; flex: none;` : css`flex: 1; min-height: 0;`)}
`;
const BrowserRow = styled.div`
  height: 18px; display: flex; align-items: center; padding-left: 9px;
  & > svg { margin-right: 6px; }
  & > b { font-weight: 400; padding-top: 2px; }
`;
const Expander = styled.span`width: 14px; display: flex; flex: none; padding-left: 1px;`;
const dots = css`
  background-image: radial-gradient(circle at 1px 1px, #fff 0.8px, transparent 0.9px), radial-gradient(circle at 1px 1px, #fff 0.8px, transparent 0.9px);
  background-size: 3px 4px; background-position: 0 0, 1px 2px;
`;
const HSplit = styled.i`height: 4px; flex: none; margin: 1px 1px 0; ${dots}`;
const VSplit = styled.i<{ $w: number }>`width: ${({ $w }) => $w}px; flex: none; border-left: 1px solid ${BG}; border-right: 1px solid ${BG}; ${dots}`;
const LayerRow = styled.div`
  height: 21px; width: 292px; background: ${SEL}; color: #fff; display: flex; align-items: center; padding-left: 26px; font-weight: 700;
`;
const Swatch = styled.i`width: 16px; height: 16px; margin: 0 6px 0 6px; background: #3b8a70; border: 1px solid #2a6552;`;
const LayerName = styled.span`height: 17px; line-height: 18px; border-bottom: 1px solid #fff;`;
const CheckFrame = styled.span`
  width: 16px; height: 16px; flex: none; border: 1px solid #a3a3a0; border-bottom-color: #878783; border-radius: 3px;
  background: linear-gradient(#fdfdfd, #e9e9e8); display: flex; align-items: center; justify-content: center;
`;
const Check = ({ on = false }: { on?: boolean }) => (
  <CheckFrame>{on && <svg width="12" height="12" viewBox="0 0 12 12"><path d="M1 5.500L4.500 10 11.500 2.500" fill="none" stroke="#2e3436" strokeWidth="2.600" /></svg>}</CheckFrame>
);
const DockButton = ({ kind }: { kind: 'float' | 'close' }) => (
  <svg width="11" height="11" viewBox="0 0 11 11">
    <rect x=".5" y=".5" width="10" height="10" rx="1.500" fill="none" stroke="#555" />
    {kind === 'float'
      ? <path d="M4.500 4V2.500h4v4H7M2.500 4.500h4v4h-4z" fill="none" stroke="#555" />
      : <path d="M3 3l5 5M8 3l-5 5" stroke="#555" strokeWidth="1.800" />}
  </svg>
);

/* ---------- map: sinusoidal tiles drawn in geographic coordinates ---------- */

const Canvas = styled.section`
  width: 962px; flex: none; position: relative; background: #fff; border-left: 1px solid #9b9b97; border-top: 1px solid #9b9b97;
`;
/* each row spans 10 degrees of latitude; each pair is a run of tiles, from and to */
const tileRows: [number, number][][] = [
  [[-5.03, -2], [-1, 5.02]],
  [[-10.08, -2.97], [-1, 11.11]],
  [[-11, -4.97], [-3, 13]],
  [[-15, -13.95], [-11, -5.97], [-2, 13.98]],
  [[-15, -13.93], [-11, -4.97], [-3, 16]],
  [[-17, -14.94], [-10, -4], [-2, 6], [7, 17]],
  [[-17, -12.94], [-10, -3], [-2, -1], [0, 6], [7, 8], [9, 17]],
  [[-16, -11.94], [-8, -3], [-1, 0], [1, 6], [9, 16]],
  [[-15, -10.95], [-10, -8.96], [-8, -2], [1, 6], [9, 14.98]],
  [[-7, -4], [-2, 0], [1, 3], [6, 7], [9, 13]],
  [[-6, -3.97], [-1, 0], [2, 5], [10, 11.11]],
  [[-5.03, -1], [0, 1], [4, 5.02]],
];
const MapTiles = () => {
  const px = 2.6417;
  const X = (k: number, lat: number) => (479.2 + (px * 10 * k) / Math.cos((lat * Math.PI) / 180)).toFixed(2);
  const Y = (lat: number) => (239.0 - px * lat).toFixed(2);
  const tiles: string[] = [];
  tileRows.forEach((row, r) => {
    const t = 60 - r * 10;
    const b = t - 10;
    row.forEach(([from, to]) => {
      const first = Math.round(from);
      const last = Math.round(to);
      for (let k = first; k < last; k++) {
        const w = k === first ? from : k;
        const e = k + 1 === last ? to : k + 1;
        tiles.push(`${X(w, t)},${Y(t)} ${X(e, t)},${Y(t)} ${X(e, b)},${Y(b)} ${X(w, b)},${Y(b)}`);
      }
    });
  });
  return (
    <svg width="960" height="470" viewBox="0 0 960 470">
      {tiles.map((p) => <polygon key={p} points={p} fill="#338642" stroke="#0b0f0b" strokeWidth="1" strokeLinejoin="miter" strokeMiterlimit="12" />)}
    </svg>
  );
};

/* ---------- dialog ---------- */

const Dialog = styled.div`
  position: absolute; left: 65px; top: 441px; width: 857px; height: 382px; background: ${BG};
  border: 1px solid #6b6b6b; border-radius: 5px 5px 2px 2px; box-shadow: 0 3px 12px rgba(0, 0, 0, 0.42);
  display: flex; flex-direction: column;
`;
const DialogTitle = styled.div`
  height: 30px; flex: none; display: flex; align-items: center; padding: 0 0 2px 6px; border-radius: 5px 5px 0 0;
  background: linear-gradient(#f2f2f1, ${BG});
`;
const DialogControls = styled.div`
  align-self: flex-start; width: 74px; height: 26px; display: flex; align-items: center; justify-content: space-between; padding: 2px 10px 0 9px;
  background: linear-gradient(#cfcfcd, #aeaeac); border-left: 1px solid #a0a09e; border-bottom: 1px solid #c5c5c3; border-radius: 0 4px 0 5px;
`;
const DialogBody = styled.div`flex: 1; padding: 0 14px 0 13px; display: flex; flex-direction: column;`;
const TabRow = styled.div`height: 40px; display: flex; align-items: flex-end; position: relative; z-index: 1;`;
const Tab = styled.span<{ $active?: boolean; $w: number }>`
  width: ${({ $w }) => $w}px; height: ${({ $active }) => ($active ? 31 : 28)}px; padding: ${({ $active }) => ($active ? '4px 3px 3px' : '0')};
  border: 1px solid #b4b4b2; border-bottom: ${({ $active }) => ($active ? '0' : '1px solid #b4b4b2')}; border-radius: 3px 3px 0 0;
  background: ${({ $active }) => ($active ? '#fff' : '#f1f1f0')}; text-align: center; line-height: 26px;
  ${({ $active }) => !$active && css`border-left-width: 0;`}
`;
const TabFocus = styled.span`display: block; width: 81px; height: 22px; border: 1px solid #dcdcda; border-radius: 2px; line-height: 20px;`;
const Push = styled.button<{ $w: number; $h: number }>`
  width: ${({ $w }) => $w}px; height: ${({ $h }) => $h}px; flex: none; padding: 0; font: inherit; color: ${INK};
  border: 1px solid #b0b0ae; border-bottom-color: #8e8e8c; border-radius: 3px; background: linear-gradient(#f0f0ef, #e4e4e3 45%, #d2d2d0);
  box-shadow: inset 0 1px 0 #f8f8f8; display: flex; align-items: center; justify-content: center;
`;
const BatchWrap = styled.div`flex: 1; display: flex; justify-content: flex-end; align-self: flex-start; padding: 11px 0 0 0;`;
const Frame = styled.div`
  height: 215px; width: 829px; margin-top: -1px; flex: none; border: 1px solid #b4b4b2; display: flex;
`;
const FrameInner = styled.div`flex: 1; border: 1px solid #fbfbfb; display: flex;`;
const Form = styled.div`flex: 1; display: flex; flex-direction: column; & > * { flex: none; }`;
const Label = styled.div<{ $h: number; $pt?: number; $mt?: number }>`
  height: ${({ $h }) => $h}px; padding-top: ${({ $pt = 0 }) => $pt}px; margin-top: ${({ $mt = 0 }) => $mt}px; white-space: nowrap;
`;
const FormRow = styled.div<{ $h: number }>`height: ${({ $h }) => $h}px; padding-left: 1px; display: flex; gap: 4px;`;
const Combo = styled(Push)`justify-content: flex-start; padding: 0 8px 0 4px; & > span { flex: 1; text-align: left; }`;
const ComboRule = styled.i`width: 1px; height: 18px; background: #b8b8b6; margin-right: 3px;`;
const CheckRow = styled.div`height: 26px; display: flex; align-items: center; gap: 6px; padding-left: 2px;`;
const Field = styled.div<{ $w: number; $h: number; $ph?: boolean; $center?: boolean; $pl?: number }>`
  width: ${({ $w }) => $w}px; height: ${({ $h }) => $h}px; flex: none; background: #fff; border: 1px solid #b0b0ae; border-radius: 3px;
  padding-left: ${({ $pl = 3 }) => $pl}px; display: flex; align-items: center; color: ${({ $ph }) => ($ph ? '#8e8f8f' : '#000')};
  ${({ $center }) => $center && css`justify-content: center;`}
`;
const Advanced = styled.div`height: 29px; display: flex; align-items: center; gap: 10px; padding-left: 5px; font-weight: 700; color: #2e3436;`;
const ScrollTrack = styled.div<{ $w: number; $pt: number }>`
  width: ${({ $w }) => $w}px; flex: none; background: #c2c4c3; border-left: 1px solid #b0b2b1; padding: ${({ $pt }) => $pt}px 3px 0;
`;
const ScrollThumb = styled.i<{ $h: number }>`display: block; height: ${({ $h }) => $h}px; border-radius: 3px; background: #7b7f7f;`;
const Progress = styled.div`
  height: 21px; width: 827px; margin: 28px 0 0 1px; border: 1px solid #b0b0ae; background: #cececc; text-align: center; line-height: 20px; display: flex; flex: none;
  & > i { width: 4px; margin: -1px 0 -1px -1px; background: ${SEL}; border: 1px solid #2b5c95; border-radius: 1px; }
  & > span { flex: 1; padding-right: 3px; }
`;
const DialogButtons = styled.div`display: flex; justify-content: flex-end; gap: 8px; padding: 8px 0 0;`;

/* ---------- processing toolbox ---------- */

const Toolbox = styled.section`width: 594px; flex: none; display: flex; flex-direction: column;`;
const SearchBox = styled(Field)`margin: 0 0 1px 1px;`;
const ToolTree = styled(Tree)`display: flex;`;
const ToolList = styled.div`flex: 1; overflow: hidden;`;
const AlgoRow = styled.div<{ $h: number; $pl: number; $sel?: boolean }>`
  height: ${({ $h }) => $h}px; padding: ${({ $h }) => ($h === 18 ? 2 : 0)}px 0 0 ${({ $pl }) => $pl}px; display: flex; align-items: center; white-space: nowrap;
  ${({ $sel }) => $sel && css`background: ${SEL}; color: #fff;`}
  & > svg { margin-right: 5px; }
`;
const RowCaret = styled.span<{ $w: number }>`width: ${({ $w }) => $w}px; display: flex; flex: none;`;

/* ---------- status bar ---------- */

const StatusBar = styled.footer`height: 31px; flex: none; display: flex; align-items: center; padding: 4px 0 0 818px;`;
const StatusText = styled.span<{ $w: number; $pl?: number }>`width: ${({ $w }) => $w}px; padding-left: ${({ $pl = 0 }) => $pl}px; flex: none; white-space: nowrap;`;
const StatusIcon = styled.span<{ $w: number; $pl?: number }>`width: ${({ $w }) => $w}px; padding-left: ${({ $pl = 0 }) => $pl}px; flex: none; display: flex; justify-content: center;`;
const ScaleBox = styled.div`
  width: 118px; height: 23px; flex: none; border: 1px solid #b0b0ae; border-radius: 3px; display: flex; color: #000; background: #fff;
  & > span { width: 87px; display: flex; justify-content: flex-end; padding-right: 6px; align-items: center; white-space: nowrap; letter-spacing: -0.45px; }
  & > b { flex: 1; display: flex; align-items: center; justify-content: center; border-left: 1px solid #c4c4c2; background: linear-gradient(#f0f0ef, #d2d2d0); }
`;
const SpinBox = styled(Field)`& > span { flex: 1; }`;
const SpinArrows = styled.span`
  && { flex: none; } width: 15px; height: 100%; display: flex; flex-direction: column; align-items: center; justify-content: space-around; background: #f1f1f0; border-left: 1px solid #b0b0ae;
`;

const Spin = ({ value }: { value: string }) => (
  <SpinBox $w={86} $h={23} $pl={6}>
    <span>{value}</span>
    <SpinArrows><Caret $dir="up" $s={4} /><Caret $s={4} /></SpinArrows>
  </SpinBox>
);

/* ---------- data ---------- */

const menus: [string, number, number][] = [
  ['Project', 3, 63], ['Edit', 0, 43], ['View', 0, 50], ['Layer', 0, 55], ['Settings', 0, 71], ['Plugins', 0, 65],
  ['Vector', 4, 60], ['Raster', 0, 61], ['Database', 0, 80], ['Web', 0, 46], ['Processing', 3, 88], ['Help', 0, 70],
];
const bar1 = ['newdoc', 'open', 'save', 'saveas', 'composer', 'manager', '|7,4', '!touch', 'hand', 'pansel', 'zoomin', 'zoomout', 'zoom11', 'zoomfull', 'zoomsel', 'zoomlayer', 'zoomlast', 'zoomnext', 'newbook', 'book', 'refresh', '|7,3', 'info', 'action', 'v0', 'select', 'v', 'eps', 'v', 'desel', 'table', 'abacus', 'sigma', 'ruler', 'v', 'tip', 'annot', 'v', '|8,4', 'help'];
const bar2 = ['edit', 'saveedit', 'addfeat', 'addcurve', 'v0', 'movefeat', 'node', 'trash', 'cut', 'copy', 'paste', '|8,3', 'tagon', 'pie', 'tagpin', 'tagpin0', 'tageye', 'tagmove', 'tagrot', 'tagedit', '|8,3', 'csw', '|8,4', 'python'];
const bar3 = ['grassopen', 'grassreg'];
const side: [string, boolean][] = [
  ['addvector', false], ['addraster', false], ['addsqlite', false], ['addpg', true], ['addwms', true],
  ['addwcs', false], ['addwfs', true], ['addcsv', false], ['addvirt', false], ['newvector', true],
];
const browser: [string, string, boolean][] = [
  ['folder', 'Home', true], ['star', 'Favourites', false], ['folder', '/', true], ['db2', 'DB2', false], ['mssql', 'MSSQL', false],
  ['pg', 'PostGIS', false], ['feather', 'SpatiaLite', false], ['arcf', 'ArcGisFeatureServer', false], ['arcm', 'ArcGisMapServer', false],
  ['ows', 'OWS', false], ['wms', 'Tile Server (XYZ)', false], ['wcs', 'WCS', false], ['wfs', 'WFS', false], ['wms', 'WMS', false],
];
const algorithms = [
  'v.buffer.column - Creates a buffer around features of given type.',
  'v.buffer.distance - Creates a buffer around features of given type.',
  'v.build.check - Checks for topological errors.',
  'v.build.polylines - Builds polylines from lines or boundaries.',
  'v.class - Classifies attribute data, e.g. for thematic mapping.',
  'v.clean - Toolset for cleaning topology of vector map.',
  'v.clean.advanced - Toolset for cleaning topology of vector map (Advanced).',
  'v.db.select - Prints vector map attributes',
  'v.delaunay - Creates a Delaunay triangulation from an input vector map …',
  'v.dissolve - Dissolves boundaries between adjacent areas sharing a com…',
  "v.distance - Finds the nearest element in vector map 'to' for elements in …",
  'v.drape - Converts vector map to 3D by sampling of elevation raster map.',
  'v.edit - Edits a vector map, allows adding, deleting and modifying selecte…',
  'v.extract - Selects vector objects from a vector layer a new layer containi…',
  'v.extrude - Extrudes flat vector object to 3D with defined height.',
  'v.generalize.displacement - Vector based displacement generalization.',
  'v.generalize.network - Vector based network generalization.',
  'v.generalize.simplify - Vector based simplification generalization.',
  'v.generalize.smooth - Vector based smooth generalization.',
  'v.hull - Produces a convex hull for a given vector map.',
  'v.in.ascii.points - Creates a vector map from an ASCII points file.',
  'v.in.ascii.standard - Creates a vector map from an ASCII vector file.',
  'v.in.dxf - Converts files in DXF format to GRASS vector map format.',
  'v.in.geonames - Imports geonames.org country files into a GRASS vector …',
  'v.in.lidar - Converts LAS LiDAR point clouds to a GRASS vector map with li…',
  'v.in.lines - Import ASCII x,y[,z] coordinates as a series of lines.',
  'v.in.mapgen - Imports Mapgen or Matlab-ASCII vector maps into GRASS.',
  'v.in.wfs - Import GetFeature from WFS',
  'v.info - Outputs basic information about a user-specified vector map.',
  'v.kcv - Randomly partition points into test/train sets.',
  'v.kernel.rast - Generates a raster density map from vector points map.',
  'v.kernel.vector - Generates a vector density map from vector points on a …',
  'v.lidar.correction - Correction of the v.lidar.growing output. It is the last of…',
  "v.lidar.edgedetection - Detects the object's edges from a LIDAR data set.",
  'v.lidar.growing - Building contour determination and Region Growing algo…',
  'v.lrs.create - Creates Linear Reference System',
  'v.lrs.segment - Creates points/segments from input lines, linear referenc…',
];

const Tools = ({ items }: { items: string[] }) => (
  <>
    {items.map((t, i) => {
      if (t[0] === '|') {
        const [l, r] = t.slice(1).split(',').map(Number);
        return <Handle key={i} $l={l} $r={r} />;
      }
      if (t === 'v' || t === 'v0') return <Slot key={i} $w={18}><Caret $c={t === 'v' ? '#2e3436' : '#8b8d8d'} /></Slot>;
      if (t[0] === '!') return <Slot key={i} $on><Icon name={t.slice(1)} /></Slot>;
      return <Slot key={i}><Icon name={t} /></Slot>;
    })}
  </>
);

const DockButtonPad = styled.b`display: block; padding-top: 3px;`;
const DockButtons = () => (
  <>
    <DockButtonPad><DockButton kind="float" /></DockButtonPad>
    <DockButtonPad><DockButton kind="close" /></DockButtonPad>
  </>
);

export default function App() {
  return (
    <Window>
      <GlobalStyle />
      <TitleBar>
        <Icon name="logo" size={20} />
        <TitleText $faded $shift={-3}>QGIS 2.18.10 (on ipv6.dynamic.ziggo.nl)</TitleText>
        <WinControls>
          <Icon name="up" size={10} /><Icon name="min" size={10} /><Icon name="restore" size={11} /><Icon name="close" size={10} />
        </WinControls>
      </TitleBar>
      <MenuBar>
        {menus.map(([name, k, w]) => (
          <MenuItem key={name} $w={w}>{name.slice(0, k)}<Mnemonic>{name[k]}</Mnemonic>{name.slice(k + 1)}</MenuItem>
        ))}
      </MenuBar>
      <ToolRow><Handle /><Tools items={bar1} /></ToolRow>
      <ToolRow>
        <Handle />
        <EditSlot $w={41}><Icon name="edits" /><Caret $c="#8b8d8d" $s={4} /></EditSlot>
        <Tools items={bar2} />
      </ToolRow>
      <ToolRow><Handle /><Tools items={bar3} /></ToolRow>

      <Body>
        <SideBar>
          <SideHandle />
          <SideSlots>
            {side.map(([n, menu]) => <SideSlot key={n}><Icon name={n} />{menu && <Caret />}</SideSlot>)}
          </SideSlots>
          <SideHandle />
        </SideBar>

        <Dock>
          <DockTitle $h={27} $pt={4}><span>Browser Panel</span><DockButtons /></DockTitle>
          <DockTools $h={30} $pb={2}>
            {['addlayer', 'reload', 'funnel', 'collapse', 'infodisc'].map((n) => <Slot key={n} $w={28}><Icon name={n} size={15} /></Slot>)}
          </DockTools>
          <Tree $h={518}>
            {browser.map(([icon, name, open]) => (
              <BrowserRow key={name}><Expander>{open && <Caret $dir="right" />}</Expander><Icon name={icon} size={16} /><b>{name}</b></BrowserRow>
            ))}
          </Tree>
          <HSplit />
          <DockTitle $h={27} $pt={5}><span>Layers Panel</span><DockButtons /></DockTitle>
          <DockTools $h={31}>
            <Slot $w={28}><Icon name="brush" size={15} /></Slot>
            <Slot $w={28}><Icon name="group" size={15} /></Slot>
            <Slot $w={34}><Icon name="eye" size={15} /><Caret $s={4} /></Slot>
            <Slot $w={28}><Icon name="funnel" size={15} /></Slot>
            <Slot $w={28}><Icon name="epsfilter" size={15} /></Slot>
            <Slot $w={18}><Caret /></Slot>
            <Slot $w={28}><Icon name="expand" size={15} /></Slot>
            <Slot $w={28}><Icon name="collapse" size={15} /></Slot>
            <Slot $w={28}><Icon name="remove" size={15} /></Slot>
          </DockTools>
          <Tree>
            <LayerRow><Check on /><Swatch /><LayerName>MODIS_tiles Tiles</LayerName></LayerRow>
          </Tree>
        </Dock>
        <VSplit $w={6} />

        <Canvas>
          <MapTiles />
          <Dialog>
            <DialogTitle>
              <Icon name="logo" size={20} />
              <TitleText>v.info - Outputs basic information about a user-specified vector map.</TitleText>
              <DialogControls>
                <svg width="11" height="11" viewBox="0 0 11 11"><path d="M5.500 1l4.500 4.500H7.500V10h-4V5.500H1z" fill="#fff" stroke="#777" /></svg>
                <svg width="11" height="11" viewBox="0 0 11 11"><rect x="1.500" y="1.500" width="8" height="8" fill="#ccc" stroke="#777" strokeWidth="3" /><rect x="1.500" y="1.500" width="8" height="8" fill="none" stroke="#fff" /></svg>
                <svg width="11" height="11" viewBox="0 0 11 11"><path d="M1 1l9 9M10 1l-9 9" stroke="#777" strokeWidth="3.600" /><path d="M1 1l9 9M10 1l-9 9" stroke="#fff" strokeWidth="1.800" /></svg>
              </DialogControls>
            </DialogTitle>
            <DialogBody>
              <TabRow>
                <Tab $active $w={89}><TabFocus>Parameters</TabFocus></Tab>
                <Tab $w={38}>Log</Tab>
                <Tab $w={45}>Help</Tab>
                <BatchWrap><Push $w={163} $h={22}>Run as batch process...</Push></BatchWrap>
              </TabRow>
              <Frame>
                <FrameInner>
                  <Form>
                    <Label $h={23} $mt={-1}>Name of input vector map</Label>
                    <FormRow $h={32}>
                      <Combo $w={754} $h={28}><span>MODIS_tiles Tiles [EPSG:4326]</span><ComboRule /><Caret /></Combo>
                      <Push $w={22} $h={28}>...</Push>
                      <Push $w={26} $h={28}><Icon name="iter" size={14} /></Push>
                    </FormRow>
                    <CheckRow><Check />Print types/names of table columns for specified layer instead of info</CheckRow>
                    <CheckRow><Check />Print map region only</CheckRow>
                    <CheckRow><Check />Print topology information only</CheckRow>
                    <Label $h={25} $pt={2}>GRASS GIS 7 region extent (xmin, xmax, ymin, ymax)</Label>
                    <FormRow $h={26}>
                      <Field $w={784} $h={25} $ph>[Leave blank to use min covering extent]</Field>
                      <Push $w={22} $h={25}>...</Push>
                    </FormRow>
                    <Advanced><Caret $dir="right" $s={6} />Advanced parameters</Advanced>
                  </Form>
                  <ScrollTrack $w={13} $pt={16}><ScrollThumb $h={116} /></ScrollTrack>
                </FrameInner>
              </Frame>
              <Progress><i /><span>0%</span></Progress>
              <DialogButtons>
                <Push $w={83} $h={25}><span><Mnemonic>C</Mnemonic>lose</span></Push>
                <Push $w={83} $h={25}>Run</Push>
              </DialogButtons>
            </DialogBody>
          </Dialog>
        </Canvas>
        <VSplit $w={6} />

        <Toolbox>
          <DockTitle $h={26} $pt={4}><span>Processing Toolbox</span><DockButtons /></DockTitle>
          <SearchBox $w={592} $h={25} $ph>Search...</SearchBox>
          <ToolTree>
            <ToolList>
              <AlgoRow $h={17} $pl={8}><RowCaret $w={15}><Caret /></RowCaret>Recently used algorithms</AlgoRow>
              <AlgoRow $h={18} $pl={43}><Icon name="branch" size={15} />v.info - Outputs basic information about a user-specified vector map.</AlgoRow>
              <AlgoRow $h={18} $pl={8}><RowCaret $w={15}><Caret /></RowCaret><Icon name="branch" size={15} />GRASS GIS 7 commands [314 geoalgorithms]</AlgoRow>
              {['Imagery (i.*)', 'Miscellaneous (m.*)', 'Raster (r.*)'].map((n) => (
                <AlgoRow key={n} $h={17} $pl={30}><RowCaret $w={13}><Caret $dir="right" /></RowCaret>{n}</AlgoRow>
              ))}
              <AlgoRow $h={17} $pl={27}><RowCaret $w={16}><Caret /></RowCaret>Vector (v.*)</AlgoRow>
              {algorithms.map((a, i) => (
                <AlgoRow key={a} $h={18} $pl={63} $sel={i === 28}><Icon name="branch" size={15} opacity={i === 28 ? 0.5 : 1} />{a}</AlgoRow>
              ))}
            </ToolList>
            <ScrollTrack $w={14} $pt={16}><ScrollThumb $h={281} /></ScrollTrack>
          </ToolTree>
        </Toolbox>
      </Body>

      <StatusBar>
        <StatusText $w={75}>Coordinate</StatusText>
        <Field $w={234} $h={25} $center>-136.0,-77.3</Field>
        <StatusIcon $w={29}><Icon name="mouse" size={22} /></StatusIcon>
        <StatusText $w={48} $pl={9}>Scale</StatusText>
        <ScaleBox><span>1:38,017,110</span><b><Caret /></b></ScaleBox>
        <StatusIcon $w={31}><Icon name="lock" size={24} /></StatusIcon>
        <StatusText $w={73} $pl={8}>Magnifier</StatusText>
        <Spin value="100%" />
        <StatusText $w={75} $pl={11}>Rotation</StatusText>
        <Spin value="0.0" />
        <StatusIcon $w={32} $pl={4}><Check on /></StatusIcon>
        <StatusText $w={58}>Render</StatusText>
        <StatusIcon $w={30}><Icon name="crs" size={21} /></StatusIcon>
        <StatusText $w={89}>EPSG:4326</StatusText>
        <Icon name="msg" size={23} />
      </StatusBar>
    </Window>
  );
}
